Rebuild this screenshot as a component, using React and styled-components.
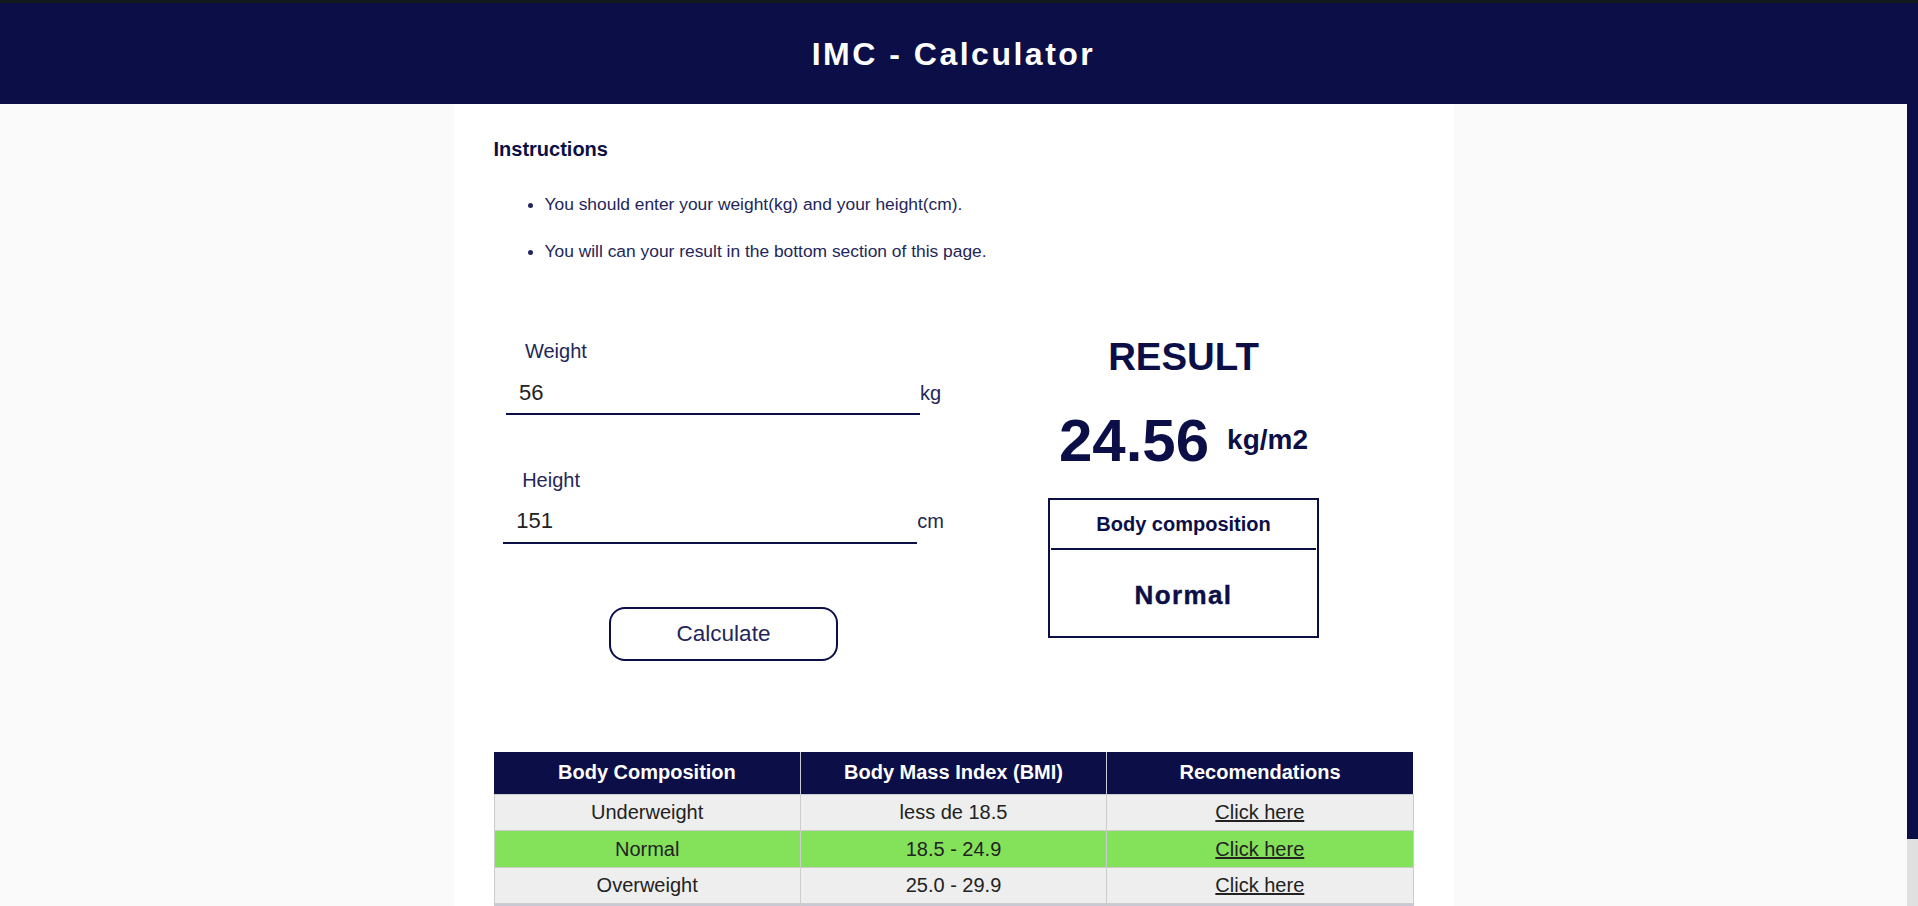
import React, { useState } from "react";
import styled, { createGlobalStyle } from "styled-components";

const navy = "#0c0f47";
const softNavy = "#23265a";

const GlobalStyle = createGlobalStyle`
  * { box-sizing: border-box; }
  html, body { margin: 0; padding: 0; }
  body {
    background: #fafafa;
    font-family: "Liberation Sans", Arial, sans-serif;
    color: ${navy};
  }
  ::-webkit-scrollbar { width: 11px; }
  ::-webkit-scrollbar-track { background: #e0e0e0; }
  ::-webkit-scrollbar-thumb { background: ${navy}; }
`;

const rows = [
  { name: "Underweight", range: "less de 18.5" },
  { name: "Normal", range: "18.5 - 24.9" },
  { name: "Overweight", range: "25.0 - 29.9" },
  { name: "Obesity", range: "30.0 or more" },
];

const getComposition = (bmi) => {
  if (bmi < 18.5) return "Underweight";
  if (bmi < 25) return "Normal";
  if (bmi < 30) return "Overweight";
  return "Obesity";
};

export default function App() {
  const [weight, setWeight] = useState("56");
  const [height, setHeight] = useState("151");
  const [bmi, setBmi] = useState(24.56);

  const calculate = () => {
    const m = Number(height) / 100;
    if (!m || !Number(weight)) return;
    setBmi(Math.round((Number(weight) / (m * m)) * 100) / 100);
  };

  const composition = getComposition(bmi);

  return (
    <>
      <GlobalStyle />
      {/* page scrollbar, drawn since the headless browser hides the real one */}
      <ScrollTrack>
        <ScrollThumb />
      </ScrollTrack>
      <Page>
        <Header>
          <h1>IMC - Calculator</h1>
        </Header>
        <Main>
          <SectionTitle>Instructions</SectionTitle>
          <List>
            <li>You should enter your weight(kg) and your height(cm).</li>
            <li>You will can your result in the bottom section of this page.</li>
          </List>

          <Calculator>
            <FormColumn>
              <Field>
                <Label htmlFor="weight">Weight</Label>
                <InputRow>
                  <Input
                    id="weight"
                    value={weight}
                    onChange={(e) => setWeight(e.target.value)}
                  />
                  <Unit>kg</Unit>
                </InputRow>
              </Field>
              <Field $spaced>
                <Label htmlFor="height">Height</Label>
                <InputRow>
                  <Input
                    id="height"
                    value={height}
                    onChange={(e) => setHeight(e.target.value)}
                  />
                  <Unit>cm</Unit>
                </InputRow>
              </Field>
              <CalcButton onClick={calculate}>Calculate</CalcButton>
            </FormColumn>

            <ResultColumn>
              <ResultTitle>RESULT</ResultTitle>
              <ValueRow>
                <Value>{bmi.toFixed(2)}</Value>
                <ValueUnit>kg/m2</ValueUnit>
              </ValueRow>
              <CompositionBox>
                <BoxHead>Body composition</BoxHead>
                <BoxBody>{composition}</BoxBody>
              </CompositionBox>
            </ResultColumn>
          </Calculator>

          <Table>
            <thead>
              <tr>
                <th>Body Composition</th>
                <th>Body Mass Index (BMI)</th>
                <th>Recomendations</th>
              </tr>
            </thead>
            <tbody>
              {rows.map((row) => (
                <Row
                  key={row.name}
                  $active={row.name === composition}
                  $last={row.name === "Obesity"}
                >
                  <td>{row.name}</td>
                  <td>{row.range}</td>
                  <td>
                    <a href="#">Click here</a>
                  </td>
                </Row>
              ))}
            </tbody>
          </Table>
        </Main>
      </Page>
    </>
  );
}

const ScrollTrack = styled.div`
  position: fixed;
  top: 0;
  right: 0;
  width: 11px;
  height: 100vh;
  border-top: 3px solid #121a1c;
  background: #e0e0e0;
  z-index: 10;
`;

const ScrollThumb = styled.div`
  height: 836px;
  background: ${navy};
`;

const Page = styled.div`
  margin-right: 11px;
`;

const Header = styled.header`
  height: 104px;
  border-top: 3px solid #121a1c;
  background: ${navy};
  display: flex;
  align-items: center;
  justify-content: center;

  h1 {
    margin: 0;
    color: #fff;
    font-size: 32px;
    line-height: 32px;
    font-weight: 700;
    letter-spacing: 2.5px;
  }
`;

const Main = styled.main`
  width: 1000px;
  margin: 0 auto;
  background: #fff;
  padding: 34px 40px 39px;
`;

const SectionTitle = styled.h3`
  margin: 0;
  font-size: 20px;
  line-height: 23px;
  font-weight: 700;
`;

const List = styled.ul`
  margin: 33px 0 0;
  padding-left: 51px;

  li {
    font-size: 17.4px;
    line-height: 20px;
    color: ${softNavy};
  }
  li + li {
    margin-top: 26.7px;
  }
`;

const Calculator = styled.section`
  display: grid;
  grid-template-columns: 1fr 1fr;
  margin-top: 74.5px;
`;

const FormColumn = styled.div`
  display: flex;
  flex-direction: column;
  align-items: center;
  padding-top: 5px;
`;

const Field = styled.div`
  display: flex;
  flex-direction: column;
  margin-top: ${({ $spaced }) => ($spaced ? "53.4px" : "0")};
`;

const Label = styled.label`
  padding-left: 19px;
  font-size: 20px;
  line-height: 23px;
  color: ${softNavy};
`;

const InputRow = styled.div`
  display: flex;
  align-items: baseline;
  margin-top: 9px;
`;

const Input = styled.input`
  width: 414px;
  height: 43px;
  padding: 0 13px;
  border: none;
  border-bottom: 2px solid ${navy};
  outline: none;
  background: transparent;
  font-family: inherit;
  font-size: 22px;
  color: #222;
`;

const Unit = styled.span`
  font-size: 20px;
  color: ${softNavy};
`;

const CalcButton = styled.button`
  margin-top: 63px;
  width: 229px;
  height: 54px;
  border: 2px solid ${navy};
  border-radius: 16px;
  background: #fff;
  font-family: inherit;
  font-size: 22.5px;
  color: ${softNavy};
  cursor: pointer;
`;

const ResultColumn = styled.div`
  display: flex;
  flex-direction: column;
  align-items: center;
`;

const ResultTitle = styled.h2`
  margin: 0;
  font-size: 38.4px;
  line-height: 44px;
  font-weight: 700;
`;

const ValueRow = styled.div`
  display: flex;
  align-items: center;
  gap: 18px;
  margin-top: 26.7px;
`;

const Value = styled.span`
  font-size: 60px;
  line-height: 69px;
  font-weight: 700;
`;

const ValueUnit = styled.span`
  font-size: 28px;
  line-height: 32px;
  font-weight: 700;
`;

const CompositionBox = styled.div`
  margin-top: 23.6px;
  width: 271px;
  border: 2px solid ${navy};
  padding: 1px;
`;

const BoxHead = styled.div`
  height: 49px;
  border-bottom: 2px solid ${navy};
  display: flex;
  align-items: center;
  justify-content: center;
  font-size: 20px;
  font-weight: 700;
`;

const BoxBody = styled.div`
  height: 85px;
  padding-top: 6px;
  display: flex;
  align-items: center;
  justify-content: center;
  font-size: 26px;
  font-weight: 700;
  letter-spacing: 1.4px;
  -webkit-text-stroke: 0.4px ${navy};
`;

const Table = styled.table`
  width: 100%;
  margin-top: 91px;
  border-collapse: collapse;
  table-layout: fixed;

  th {
    height: 43px;
    padding: 0;
    background: ${navy};
    color: #fff;
    font-size: 20px;
    font-weight: 700;
  }
  th + th {
    border-left: 1px solid #c8c8d8;
  }
  td {
    height: 36.4px;
    padding: 0;
    border: 1px solid #cccccc;
    text-align: center;
    font-size: 20px;
    color: #222;
  }
  a {
    color: #222;
    text-decoration: underline;
  }
`;

const Row = styled.tr`
  td {
    background: ${({ $active, $last }) =>
      $active ? "#84e15a" : $last ? "#c9c9d4" : "#eeeeee"};
  }
`;
